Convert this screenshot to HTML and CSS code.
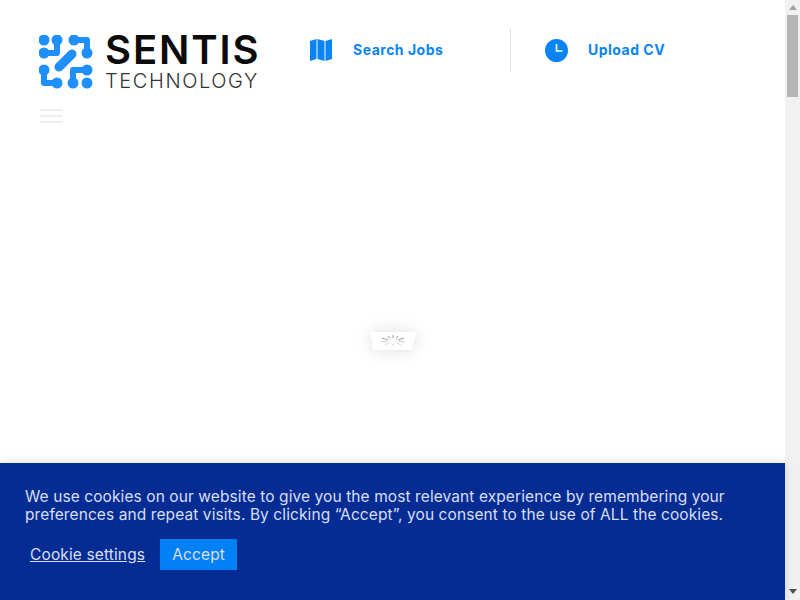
FILE: index.html
```html
<!DOCTYPE html>
<html>
<head>
  <title>Sentis Technology</title>
  <meta name="viewport" content="width=device-width,initial-scale=1.0">
  <link rel="stylesheet" href="styles.css">
</head>
<body>

  <div class="page">
    <header>
      <div class="logo">
        <svg class="logo-mark" width="54" height="54" viewBox="39 35 54 54">
          <g fill="none" stroke="#1f8ffb" stroke-width="6" stroke-linecap="round" stroke-linejoin="round">
            <path d="M57 40V53H44"/>
            <path d="M74 40H87V53"/>
            <path d="M59 67L72 54" stroke-width="9"/>
            <path d="M44 70V83H57"/>
            <path d="M87 70H73V83"/>
          </g>
          <g fill="#1f8ffb">
            <circle cx="44" cy="40" r="5.5"/>
            <circle cx="57" cy="40" r="5.5"/>
            <circle cx="44" cy="53" r="5.5"/>
            <circle cx="74" cy="40" r="5.5"/>
            <circle cx="87" cy="53" r="5.5"/>
            <circle cx="44" cy="70" r="5.5"/>
            <circle cx="57" cy="83" r="5.5"/>
            <circle cx="87" cy="70" r="5.5"/>
            <circle cx="73" cy="83" r="5.5"/>
            <circle cx="87" cy="83" r="5.5"/>
          </g>
        </svg>
        <div class="logo-text">
          <div class="logo-name">SENTIS</div>
          <div class="logo-sub">TECHNOLOGY</div>
        </div>
      </div>

      <div class="links">
        <a class="link link-jobs" href="#">
          <svg width="22" height="22" viewBox="0 0 22 22" fill="#0a84f5">
            <path d="M0 2L6.5 0V20L0 22Z"/>
            <path d="M7.5 0L14.5 2V22L7.5 20Z"/>
            <path d="M15.5 2L22 0V20L15.5 22Z"/>
          </svg>
          <span>Search Jobs</span>
        </a>
        <div class="divider"></div>
        <a class="link link-cv" href="#">
          <svg width="23" height="23" viewBox="0 0 23 23">
            <circle cx="11.5" cy="11.5" r="11.5" fill="#0a84f5"/>
            <path d="M11.5 5V12H17.5" fill="none" stroke="#fff" stroke-width="1.6"/>
          </svg>
          <span>Upload CV</span>
        </a>
      </div>
    </header>

    <div class="menu-toggle">
      <span></span>
      <span></span>
      <span></span>
    </div>

    <div class="loader">
      <div class="loader-card">
        <svg width="26" height="12" viewBox="0 0 26 12" stroke="#aaa" stroke-width="1.2">
          <path d="M13 0V3"/>
          <path d="M18 1L16 3.5"/>
          <path d="M24 3L18 5"/>
          <path d="M8 1L10 3.5"/>
          <path d="M2 3L8 5"/>
          <path d="M1 7L7 6.5" stroke="#ccc"/>
          <path d="M5 10L9 8" stroke="#ddd"/>
          <path d="M13 9V11" stroke="#ddd"/>
          <path d="M21 10L17 8" stroke="#ddd"/>
          <path d="M25 7L19 6.5" stroke="#ccc"/>
        </svg>
      </div>
    </div>

    <div class="cookie-bar">
      <p>We use cookies on our website to give you the most relevant experience by remembering your preferences and repeat visits. By clicking “Accept”, you consent to the use of ALL the cookies.</p>
      <div class="cookie-actions">
        <a class="cookie-settings" href="#">Cookie settings</a>
        <a class="cookie-accept" href="#">Accept</a>
      </div>
    </div>
  </div>

  <div class="scrollbar">
    <div class="arrow-up"></div>
    <div class="thumb"></div>
    <div class="arrow-down"></div>
  </div>

</body>
</html>
```

FILE: styles.css
```css
body {
  margin: 0;
  height: 600px;
  overflow: hidden;
  display: flex;
  background-color: #fff;
  font-family: 'Inter', 'Open Sans', sans-serif;
}

.page {
  flex: 1;
  position: relative;
}

header {
  display: flex;
  align-items: flex-start;
  padding: 28px 0 0 39px;
}

.logo {
  display: flex;
  align-items: flex-start;
  padding-top: 7px;
  width: 271px;
}

.logo-mark {
  flex: none;
  margin-right: 12px;
}

.logo-name {
  font-size: 40px;
  line-height: 29px;
  font-weight: 600;
  letter-spacing: 1.9px;
  color: #0b0b0b;
}

.logo-sub {
  margin-top: 10px;
  font-size: 20px;
  line-height: 15px;
  font-weight: 300;
  letter-spacing: 1.6px;
  color: #333;
}

.links {
  display: flex;
  height: 44px;
  align-items: center;
}

.link {
  display: flex;
  align-items: center;
  color: #0a84f5;
  font-size: 14px;
  font-weight: 700;
  letter-spacing: 0.5px;
  text-decoration: none;
}

.link span {
  margin-top: -1px;
}

.link-jobs {
  width: 200px;
}

.link-jobs span {
  margin-left: 21px;
}

.link-cv {
  margin-left: 34px;
}

.link-cv span {
  margin-left: 20px;
}

.divider {
  width: 1px;
  height: 44px;
  background-color: #e2e2e2;
}

.menu-toggle {
  margin: 20px 0 0 40px;
  width: 23px;
}

.menu-toggle span {
  display: block;
  height: 2px;
  margin-bottom: 4px;
  background-color: #eee;
}

.loader {
  position: absolute;
  left: 370px;
  top: 332px;
  filter: drop-shadow(0 0 8px rgba(0, 0, 0, 0.14));
}

.loader-card {
  display: flex;
  align-items: center;
  justify-content: center;
  width: 46px;
  height: 18px;
  background-color: #fff;
  clip-path: polygon(0 0, 100% 0, 91% 100%, 7% 100%);
}

.cookie-bar {
  position: absolute;
  left: 0;
  right: 0;
  bottom: 0;
  height: 137px;
  box-sizing: border-box;
  padding: 25px 25px 0;
  background-color: #052c93;
  color: #d8dff3;
  box-shadow: 0 0 10px rgba(0, 0, 0, 0.15);
}

.cookie-bar p {
  margin: 0;
  font-size: 15.5px;
  line-height: 18px;
  letter-spacing: 0.09px;
}

.cookie-actions {
  display: flex;
  align-items: center;
  margin-top: 15px;
  padding-left: 5px;
  font-size: 15.5px;
  letter-spacing: 0.13px;
}

.cookie-settings {
  color: #d8dff3;
}

.cookie-accept {
  margin-left: 15px;
  width: 77px;
  height: 31px;
  line-height: 31px;
  text-align: center;
  background-color: #0080f5;
  color: #d8dff3;
  text-decoration: none;
}

.scrollbar {
  flex: none;
  width: 15px;
  height: 600px;
  display: flex;
  flex-direction: column;
  align-items: center;
  background-color: #f1f1f1;
}

.arrow-up {
  margin-top: 5px;
  width: 0;
  height: 0;
  border-left: 4px solid transparent;
  border-right: 4px solid transparent;
  border-bottom: 5px solid #a3a3a3;
}

.thumb {
  margin-top: 5px;
  width: 11px;
  height: 82px;
  background-color: #b5b5b5;
}

.arrow-down {
  margin-top: auto;
  margin-bottom: 6px;
  width: 0;
  height: 0;
  border-left: 4px solid transparent;
  border-right: 4px solid transparent;
  border-top: 5px solid #505050;
}
```
